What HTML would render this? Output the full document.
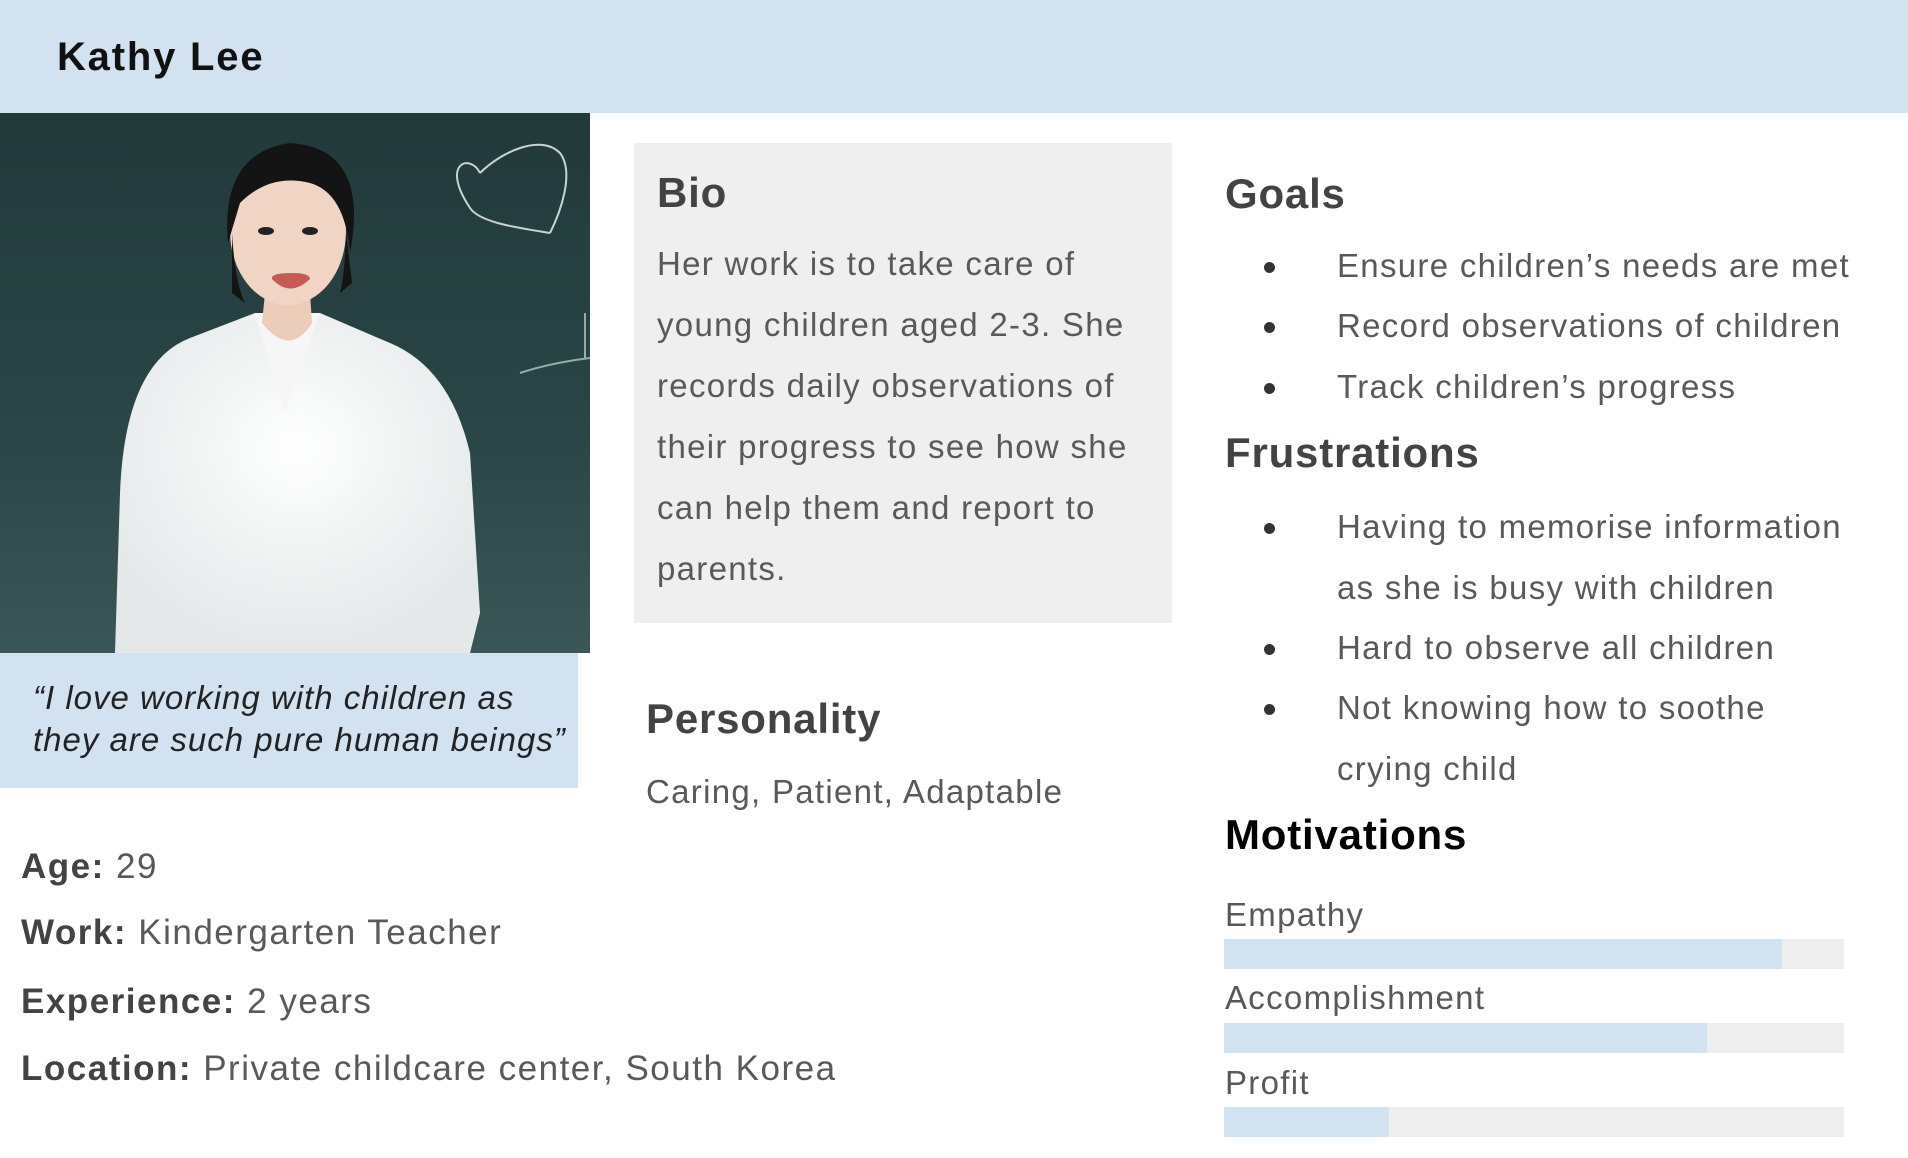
<!DOCTYPE html>
<html><head><meta charset="utf-8"><style>
*{margin:0;padding:0;box-sizing:border-box}
body{width:1908px;height:1158px;background:#fff;position:relative;overflow:hidden;font-family:"Liberation Sans",sans-serif;color:#555}
.a{position:absolute;white-space:nowrap}
.t{font-size:33px;line-height:40px;color:#595959;letter-spacing:1.3px}
.h{font-size:42px;line-height:50px;font-weight:bold;color:#434343;letter-spacing:0.8px}
.b{position:absolute;width:11px;height:11px;border-radius:50%;background:#333}
.bar{position:absolute;left:1224px;width:620px;height:30px;background:#eeeeee}
.bar div{height:100%;background:#d2e2f1}
.i{font-size:35px;letter-spacing:1.5px}
</style></head><body>
<div class="a" style="left:0;top:0;width:1908px;height:113px;background:#d2e2f1"></div>
<div class="a" style="left:57px;top:35px;font-size:40px;line-height:44px;font-weight:bold;color:#111;letter-spacing:1.8px">Kathy Lee</div>

<svg class="a" style="left:0;top:113px" width="590" height="540" viewBox="0 0 590 540">
<defs><linearGradient id="bg" x1="0" y1="0" x2="0" y2="1"><stop offset="0" stop-color="#22393a"/><stop offset="0.6" stop-color="#2a4647"/><stop offset="1" stop-color="#3a5656"/></linearGradient>
<radialGradient id="sh" cx="0.5" cy="0.4" r="0.6"><stop offset="0" stop-color="#ffffff"/><stop offset="1" stop-color="#e4e8e8"/></radialGradient></defs>
<rect width="590" height="540" fill="url(#bg)"/>
<path d="M480 60 C470 40 440 50 470 95 C480 110 520 115 550 120 M480 60 C500 40 540 20 560 40 C575 60 560 100 550 120" stroke="#c9d3d3" stroke-width="2" fill="none"/>
<path d="M520 260 Q550 250 590 245 M585 200 L585 245" stroke="#9aa" stroke-width="2" fill="none"/>
<path d="M115 540 L120 380 Q125 250 190 225 L255 200 L320 200 L390 230 Q450 255 470 340 L480 500 L470 540 Z" fill="url(#sh)"/>
<path d="M255 200 L285 300 L320 200 Z" fill="#f6f6f6"/>
<path d="M262 210 Q290 245 312 210 L310 180 L265 180 Z" fill="#eccdb9"/>
<ellipse cx="288" cy="118" rx="58" ry="74" fill="#f1d5c4"/>
<path d="M228 130 Q220 40 290 30 Q370 35 350 140 Q345 80 310 70 Q270 60 240 90 Z" fill="#141414"/>
<path d="M232 120 Q235 170 245 190 L232 180 Z M346 120 Q345 160 340 180 L352 170 Z" fill="#141414"/>
<ellipse cx="266" cy="118" rx="8" ry="4" fill="#222"/><ellipse cx="310" cy="118" rx="8" ry="4" fill="#222"/>
<path d="M292 160 Q270 160 272 166 Q290 185 310 166 Q310 160 292 160Z" fill="#c85a55"/>
</svg>

<div class="a" style="left:0;top:653px;width:578px;height:135px;background:#d2e2f1"></div>
<div class="a" style="left:33px;top:677px;font-size:33px;line-height:42px;font-style:italic;color:#222;letter-spacing:1px">“I love working with children as<br>they are such pure human beings”</div>

<div class="a" style="left:634px;top:143px;width:538px;height:480px;background:#efefef"></div>
<div class="a h" style="left:657px;top:168px">Bio</div>
<div class="a t" style="left:657px;top:233px;line-height:61px">Her work is to take care of<br>young children aged 2-3. She<br>records daily observations of<br>their progress to see how she<br>can help them and report to<br>parents.</div>

<div class="a h" style="left:646px;top:694px">Personality</div>
<div class="a t" style="left:646px;top:772px">Caring, Patient, Adaptable</div>

<div class="a t i" style="left:21px;top:847px"><b style="color:#434343">Age:</b> 29</div>
<div class="a t i" style="left:21px;top:913px"><b style="color:#434343">Work:</b> Kindergarten Teacher</div>
<div class="a t i" style="left:21px;top:982px"><b style="color:#434343">Experience:</b> 2 years</div>
<div class="a t i" style="left:21px;top:1049px"><b style="color:#434343">Location:</b> Private childcare center, South Korea</div>

<div class="a h" style="left:1225px;top:169px">Goals</div>
<div class="b" style="left:1264px;top:262px"></div><div class="a t" style="left:1337px;top:246px">Ensure children’s needs are met</div>
<div class="b" style="left:1264px;top:322px"></div><div class="a t" style="left:1337px;top:306px">Record observations of children</div>
<div class="b" style="left:1264px;top:383px"></div><div class="a t" style="left:1337px;top:367px">Track children’s progress</div>

<div class="a h" style="left:1225px;top:428px">Frustrations</div>
<div class="b" style="left:1264px;top:523px"></div><div class="a t" style="left:1337px;top:507px">Having to memorise information</div>
<div class="a t" style="left:1337px;top:568px">as she is busy with children</div>
<div class="b" style="left:1264px;top:644px"></div><div class="a t" style="left:1337px;top:628px">Hard to observe all children</div>
<div class="b" style="left:1264px;top:704px"></div><div class="a t" style="left:1337px;top:688px">Not knowing how to soothe</div>
<div class="a t" style="left:1337px;top:749px">crying child</div>

<div class="a h" style="left:1225px;top:810px;color:#000">Motivations</div>
<div class="a t" style="left:1225px;top:895px">Empathy</div>
<div class="bar" style="top:939px"><div style="width:558px"></div></div>
<div class="a t" style="left:1225px;top:978px">Accomplishment</div>
<div class="bar" style="top:1023px"><div style="width:483px"></div></div>
<div class="a t" style="left:1225px;top:1063px">Profit</div>
<div class="bar" style="top:1107px"><div style="width:165px"></div></div>
</body></html>
